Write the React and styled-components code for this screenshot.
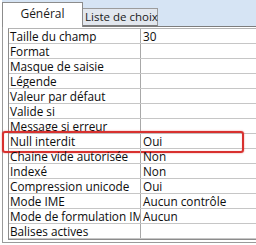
import React from "react";
import styled, { createGlobalStyle } from "styled-components";

const Global = createGlobalStyle`
  html, body { margin: 0; padding: 0; background: #ffffff; }
  body { font-family: "Open Sans", "Noto Sans", sans-serif; }
`;

const Window = styled.div`
  width: 256px;
  height: 245px;
  overflow: hidden;
  background: #ffffff;
  padding-left: 2px;
  box-sizing: border-box;
`;

const Frame = styled.div`
  width: 270px;
  height: 243px;
  display: flex;
  flex-direction: column;
  background: #d6e4f4;
`;

const TabBar = styled.div`
  height: 26px;
  display: flex;
  align-items: flex-end;
  flex: none;
  position: relative;
  z-index: 1;
`;

const Tab = styled.div`
  box-sizing: border-box;
  font-size: ${(p) => (p.$active ? 12 : 11.5)}px;
  color: #1a1a1a;
  display: flex;
  justify-content: ${(p) => (p.$active ? "center" : "flex-start")};
  white-space: nowrap;
  border: 1px solid ${(p) => (p.$active ? "#8c8c8c" : "#9c9c9c")};
  border-bottom: ${(p) => (p.$active ? "none" : "1px solid #7d7d7d")};
  border-left: ${(p) => (p.$active ? "1px solid #8c8c8c" : "none")};
  background: ${(p) => (p.$active ? "#ffffff" : "#e2e7ee")};
  width: ${(p) => p.$w}px;
  height: ${(p) => (p.$active ? 25 : 18)}px;
  margin-bottom: ${(p) => (p.$active ? -1 : 0)}px;
  padding-top: ${(p) => (p.$active ? 3 : 0)}px;
  padding-left: ${(p) => (p.$active ? 0 : 2)}px;
  line-height: 16px;
`;

const Panel = styled.div`
  flex: 1;
  background: #ffffff;
  border-top: 1px solid #7d7d7d;
  border-left: 1px solid #9a9a9a;
  border-bottom: 1px solid #9a9a9a;
  padding: 1px 0 0 5px;
`;

const Grid = styled.div`
  border-top: 1px solid #b4b4b4;
  border-left: 1px solid #8c8c8c;
  border-bottom: 1px solid #8c8c8c;
`;

const Row = styled.div`
  display: grid;
  grid-template-columns: 132px 1fr;
  height: 15px;
  box-sizing: border-box;
  border-bottom: 1px solid #c6c6c6;
  position: relative;
  font-size: 11.75px;
  line-height: 14px;
  color: #0d0d0d;
`;

const Label = styled.div`
  border-right: 1px solid #a8a8a8;
  padding-left: 1px;
  white-space: nowrap;
  overflow: hidden;
`;

const Value = styled.div`
  padding-left: 2px;
  white-space: nowrap;
`;

const Highlight = styled.div`
  position: absolute;
  left: -7px;
  top: -3px;
  width: 242px;
  height: 22px;
  box-sizing: border-box;
  border: 2px solid #d8312f;
  border-radius: 3px;
  box-shadow: 0 0 1.5px rgba(210, 40, 40, 0.7), inset 0 0 1px rgba(210, 40, 40, 0.5);
  pointer-events: none;
`;

const rows = [
  ["Taille du champ", "30"],
  ["Format", ""],
  ["Masque de saisie", ""],
  ["Légende", ""],
  ["Valeur par défaut", ""],
  ["Valide si", ""],
  ["Message si erreur", ""],
  ["Null interdit", "Oui", true],
  ["Chaine vide autorisée", "Non"],
  ["Indexé", "Non"],
  ["Compression unicode", "Oui"],
  ["Mode IME", "Aucun contrôle"],
  ["Mode de formulation IME", "Aucun"],
  ["Balises actives", ""],
];

export default function App() {
  return (
    <>
      <Global />
      <Window>
        <Frame>
          <TabBar>
            <Tab $active $w={81}>Général</Tab>
            <Tab $w={75}>Liste de choix</Tab>
          </TabBar>
          <Panel>
            <Grid>
              {rows.map(([l, v, hl]) => (
                <Row key={l}>
                  <Label>{l}</Label>
                  <Value>{v}</Value>
                  {hl && <Highlight />}
                </Row>
              ))}
            </Grid>
          </Panel>
        </Frame>
      </Window>
    </>
  );
}
